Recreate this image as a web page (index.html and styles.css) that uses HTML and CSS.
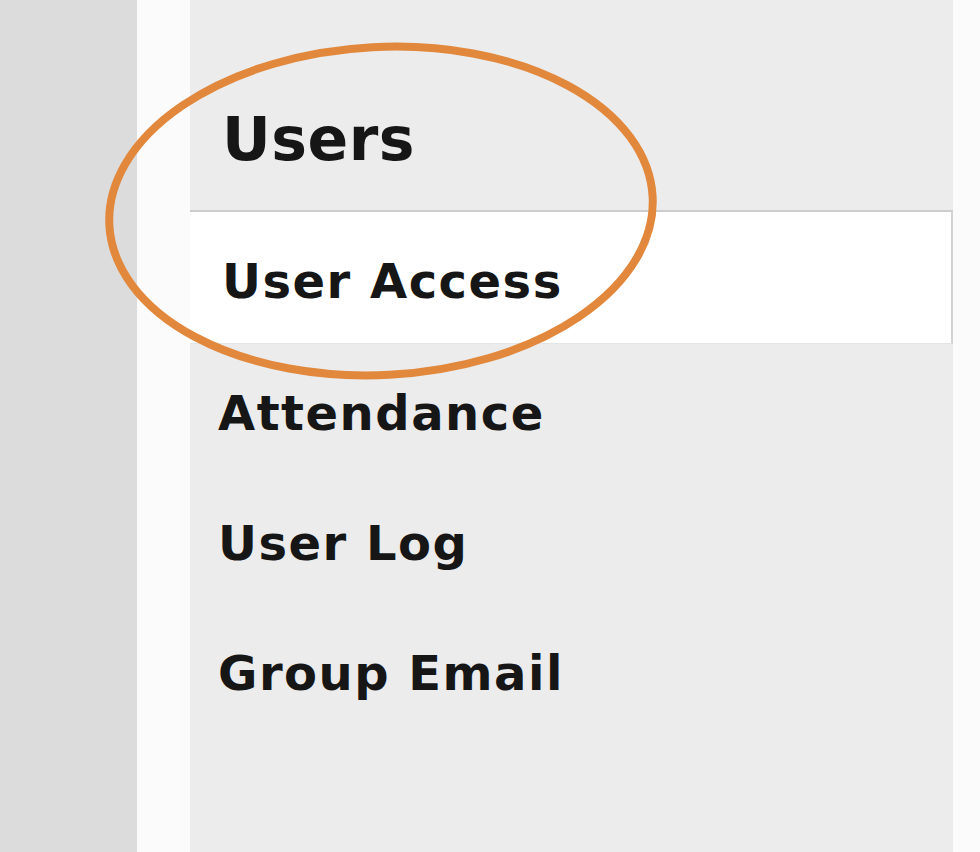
FILE: index.html
```html
<!DOCTYPE html>
<html lang="en">
<head>
  <meta charset="UTF-8" />
  <title>Users</title>
  <link rel="stylesheet" href="styles.css">
</head>
<body>
  <div class="page">
    <div class="rail"></div>
    <div class="gutter"></div>

    <!-- Sidebar menu -->
    <div class="sidebar">
      <h2 class="sidebar-title">Users</h2>
      <ul class="menu">
        <li class="menu-item active">User Access</li>
        <li class="menu-item">Attendance</li>
        <li class="menu-item">User Log</li>
        <li class="menu-item">Group Email</li>
      </ul>
    </div>

    <div class="edge"></div>

    <!-- Annotation circle drawn over the menu -->
    <svg class="mark" width="980" height="852" viewBox="0 0 980 852">
      <ellipse cx="381" cy="211" rx="272" ry="164" transform="rotate(-3 381 211)"
               fill="none" stroke="#e2883c" stroke-width="8"/>
    </svg>
  </div>
</body>
</html>
```

FILE: styles.css
```css
* {
  margin: 0;
  padding: 0;
  box-sizing: border-box;
}
body {
  font-family: "DejaVu Sans", Verdana, sans-serif;
  color: #161616;
  background: #fbfbfb;
}
.page {
  display: flex;
  height: 852px;
  position: relative;
  overflow: hidden;
}
.rail {
  width: 137px;
  background: #dcdcdc;
}
.gutter {
  width: 53px;
  background: #fbfbfb;
}
.sidebar {
  width: 763px;
  background: #ececec;
}
.edge {
  flex: 1;
  background: #fbfbfb;
}
/* Title */
.sidebar-title {
  font-size: 60px;
  font-weight: bold;
  line-height: 70px;
  padding: 104px 0 36px 32px;
  letter-spacing: 0.5px;
}
/* Menu */
.menu {
  list-style: none;
}
.menu-item {
  font-size: 48px;
  font-weight: bold;
  line-height: 56px;
  letter-spacing: 1.5px;
  padding: 37px 0 37px 28px;
}
.menu-item.active {
  background: #fff;
  border-top: 2px solid #cdcdcd;
  border-right: 2px solid #d2d2d2;
  border-bottom: 1px solid #e4e4e4;
  padding: 41px 0 34px 32px;
  margin-bottom: 4px;
}
.mark {
  position: absolute;
  top: 0;
  left: 0;
  pointer-events: none;
}
```
